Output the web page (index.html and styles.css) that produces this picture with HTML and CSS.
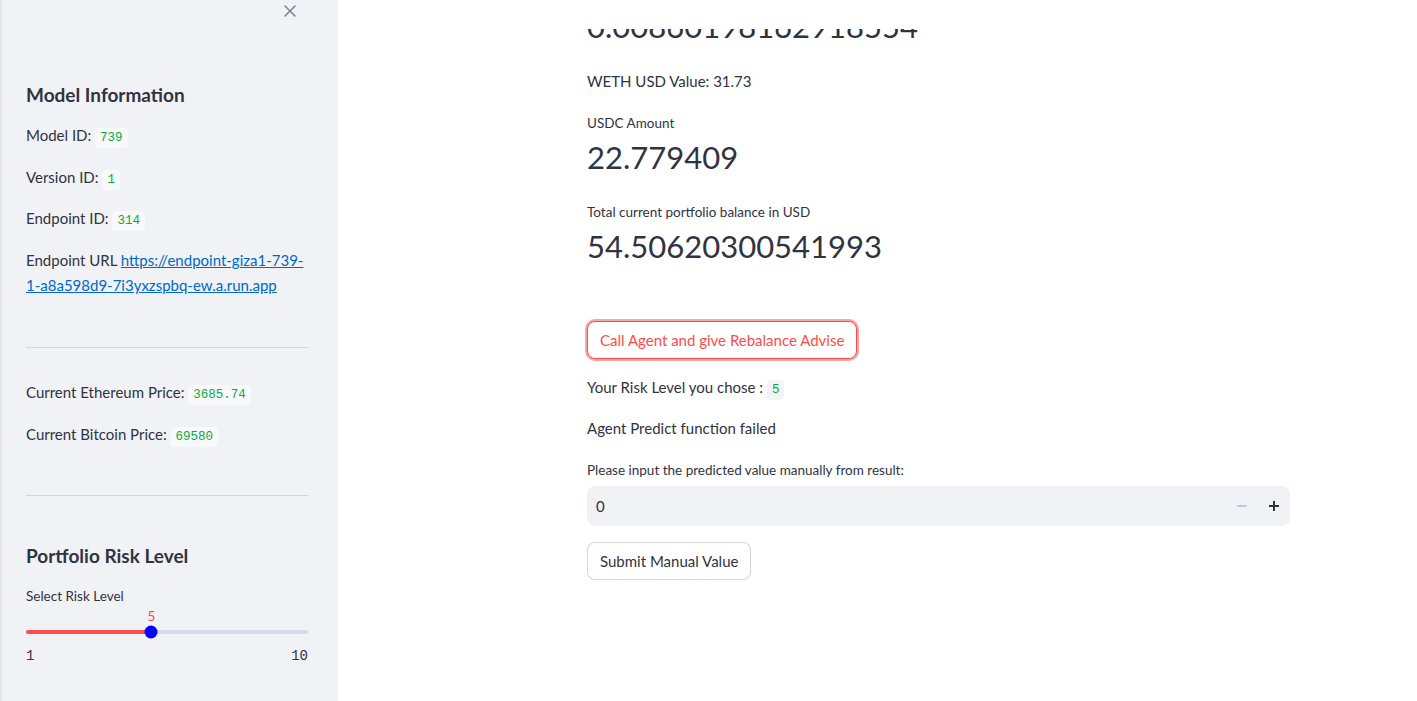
FILE: index.html
```html
<!DOCTYPE html>
<html lang="en">
<head>
<meta charset="utf-8">
<title>Portfolio Agent</title>
<link rel="stylesheet" href="styles.css">
</head>
<body>
<div class="app">
  <aside class="sidebar">
    <div class="sidebar-header">
      <button class="close-btn" aria-label="Close sidebar">
        <svg width="14" height="14" viewBox="0 0 14 14"><path d="M2 2 L12 12 M12 2 L2 12" stroke="#808495" stroke-width="1.6" stroke-linecap="round" fill="none"/></svg>
      </button>
    </div>
    <div class="sidebar-content">
      <h3 class="side-heading">Model Information</h3>
      <p class="text">Model ID: <code class="chip">739</code></p>
      <p class="text">Version ID: <code class="chip">1</code></p>
      <p class="text">Endpoint ID: <code class="chip">314</code></p>
      <p class="text">Endpoint URL <a class="link" href="#">https://endpoint-giza1-739-<wbr>1-a8a598d9-7i3yxzspbq-ew.a.run.app</a></p>
      <hr class="divider">
      <p class="text">Current Ethereum Price: <code class="chip">3685.74</code></p>
      <p class="text">Current Bitcoin Price: <code class="chip">69580</code></p>
      <hr class="divider">
      <h3 class="side-heading second">Portfolio Risk Level</h3>
      <div class="slider">
        <div class="widget-label">Select Risk Level</div>
        <div class="slider-body">
          <div class="thumb-value" style="left:44.44%">5</div>
          <div class="track-wrap">
            <div class="track">
              <div class="fill" style="width:44.44%"></div>
              <div class="thumb" style="left:44.44%"></div>
            </div>
          </div>
          <div class="ticks"><span>1</span><span>10</span></div>
        </div>
      </div>
    </div>
  </aside>
  <main class="main">
    <div class="viewport">
      <div class="block">
        <div class="metric">
          <div class="metric-label">WETH Amount</div>
          <div class="metric-value">0.00860198162918554</div>
        </div>
        <p class="text">WETH USD Value: 31.73</p>
        <div class="metric">
          <div class="metric-label">USDC Amount</div>
          <div class="metric-value">22.779409</div>
        </div>
        <div class="metric">
          <div class="metric-label">Total current portfolio balance in USD</div>
          <div class="metric-value">54.50620300541993</div>
        </div>
        <div class="spacer"></div>
        <div class="btn-row"><button class="btn btn-focus">Call Agent and give Rebalance Advise</button></div>
        <p class="text">Your Risk Level you chose : <code class="chip chip-main">5</code></p>
        <p class="text">Agent Predict function failed</p>
        <div class="number-input">
          <div class="widget-label spaced">Please input the predicted value manually from result:</div>
          <div class="input-box">
            <span class="input-value">0</span>
            <div class="steppers">
              <button class="step" aria-label="Decrement">
                <svg width="10" height="10" viewBox="0 0 10 10"><path d="M1 5 H9" stroke="#c6c9d1" stroke-width="1.8" stroke-linecap="round"/></svg>
              </button>
              <button class="step" aria-label="Increment">
                <svg width="10" height="10" viewBox="0 0 10 10"><path d="M1 5 H9 M5 1 V9" stroke="#31333f" stroke-width="2" stroke-linecap="square"/></svg>
              </button>
            </div>
          </div>
        </div>
        <div class="btn-row"><button class="btn">Submit Manual Value</button></div>
      </div>
    </div>
  </main>
</div>
</body>
</html>
```
FILE: styles.css
```css
* { box-sizing: border-box; }
html, body { margin: 0; padding: 0; height: 100%; }
body {
  font-family: Lato, "Noto Sans", sans-serif;
  color: #31333f;
  background: #ffffff;
  font-size: 15px;
}
.app {
  display: flex;
  height: 701px;
  overflow: hidden;
}
.sidebar {
  width: 338px;
  flex-shrink: 0;
  background: #f0f2f6;
  border-left: 2px solid #e4e6ea;
  padding: 0 30px 0 24px;
}
.sidebar-header {
  height: 22px;
  display: flex;
  justify-content: flex-end;
  align-items: center;
}
.close-btn {
  background: none;
  border: 0;
  padding: 0;
  margin-right: 11px;
  display: flex;
}
.sidebar-content {
  padding-top: 61px;
  display: flex;
  flex-direction: column;
  gap: 16px;
}
.side-heading {
  margin: 0;
  font-size: 19px;
  font-weight: 700;
  line-height: 24px;
}
.side-heading.second { margin-top: 16px; }
.text {
  margin: 0;
  font-size: 15px;
  line-height: 25.6px;
}
.chip {
  font-family: "Liberation Mono", "DejaVu Sans Mono", monospace;
  font-size: 12.5px;
  line-height: 1;
  color: #09ab3b;
  background: #f8f9fb;
  padding: 3px 5px;
  border-radius: 4px;
}
.chip-main { background: #f3f4f7; }
.link {
  color: #0068c9;
  text-decoration: underline;
}
.divider {
  border: 0;
  border-top: 1px solid #d3d5da;
  margin: 32px 0 16px;
  height: 0;
}
.widget-label {
  font-size: 13.5px;
  line-height: 24px;
}
.widget-label.spaced { margin-bottom: 4px; }
.slider-body {
  position: relative;
  padding-top: 16px;
}
.thumb-value {
  position: absolute;
  top: 0;
  transform: translateX(-50%);
  font-size: 13.5px;
  line-height: 16px;
  color: #ff4b4b;
}
.track-wrap {
  height: 16px;
  display: flex;
  align-items: center;
}
.track {
  position: relative;
  width: 100%;
  height: 4px;
  border-radius: 2px;
  background: #d6dae4;
}
.fill {
  height: 100%;
  border-radius: 2px;
  background: #ff4b4b;
}
.thumb {
  position: absolute;
  top: 50%;
  width: 13px;
  height: 13px;
  border-radius: 50%;
  background: #0000ff;
  transform: translate(-50%, -50%);
}
.ticks {
  display: flex;
  justify-content: space-between;
  margin-top: 5px;
  font-family: "Liberation Mono", "DejaVu Sans Mono", monospace;
  font-size: 14px;
  line-height: 22px;
}
.main {
  flex: 1;
  padding-top: 29px;
  height: 701px;
}
.viewport {
  height: 100%;
  overflow: hidden;
}
.block {
  width: 703px;
  margin: -49px 0 0 249px;
  display: flex;
  flex-direction: column;
  gap: 16px;
}
.metric-label {
  font-size: 13.5px;
  line-height: 24px;
}
.metric-value {
  font-size: 31px;
  line-height: 45px;
  padding-bottom: 4px;
  white-space: nowrap;
}
.spacer { height: 16px; }
.btn-row { display: flex; }
.btn {
  height: 38px;
  display: inline-flex;
  align-items: center;
  padding: 0 12px;
  background: #ffffff;
  border: 1px solid rgba(49, 51, 63, 0.2);
  border-radius: 8px;
  font-family: inherit;
  font-size: 15px;
  color: #31333f;
}
.btn-focus {
  border-color: #ff4b4b;
  color: #ff4b4b;
  box-shadow: 0 0 0 2px rgba(255, 75, 75, 0.5);
}
.input-box {
  height: 40px;
  display: flex;
  align-items: center;
  justify-content: space-between;
  background: #f0f2f6;
  border-radius: 8px;
  padding-left: 9px;
}
.input-value {
  font-size: 15px;
}
.steppers {
  display: flex;
  height: 100%;
}
.step {
  width: 32px;
  height: 100%;
  border: 0;
  background: transparent;
  display: flex;
  align-items: center;
  justify-content: center;
  padding: 0;
}
```
